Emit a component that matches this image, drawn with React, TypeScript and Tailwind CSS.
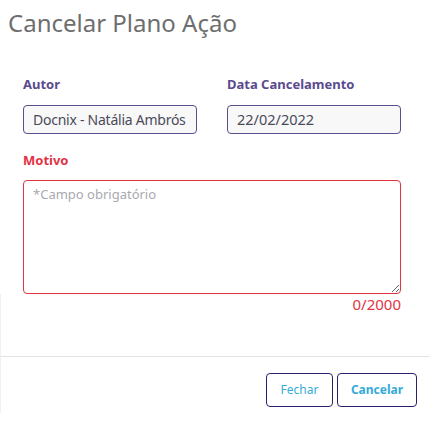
import React from "react";

const App = () => {
  return (
    <div className="w-[430px] h-[431px] bg-white font-['Noto_Sans',sans-serif] overflow-hidden">
      <h1 className="pt-[7px] pl-2 text-[24px] leading-[32px] font-normal text-[#6e6e6e]">
        Cancelar Plano Ação
      </h1>

      <div className="pl-[23px] pr-[29px] mt-[36px]">
        <div className="grid grid-cols-2 gap-[30px]">
          <div>
            <label className="block text-[13px] leading-[18px] font-bold text-[#5b4a8e]">
              Autor
            </label>
            <div className="mt-3 w-full h-[29px] pl-[9px] pr-[10px] flex items-center rounded border border-[#5c4d8f] bg-[#f8f8f8]">
              <span className="block min-w-0 flex-1 overflow-hidden whitespace-nowrap text-[14px] tracking-[-0.25px] text-[#4a4a58]">
                Docnix - Natália Ambrósio
              </span>
            </div>
          </div>
          <div>
            <label className="block text-[13px] leading-[18px] font-bold text-[#5b4a8e]">
              Data Cancelamento
            </label>
            <div className="mt-3 w-full h-[29px] pl-[9px] pr-[10px] flex items-center rounded border border-[#5c4d8f] bg-[#f8f8f8]">
              <span className="block min-w-0 flex-1 overflow-hidden whitespace-nowrap text-[14.5px] text-[#4a4a58]">
                22/02/2022
              </span>
            </div>
          </div>
        </div>

        <label className="block mt-[17px] text-[13px] leading-[18px] font-bold text-[#e23345]">
          Motivo
        </label>
        <textarea
          placeholder="*Campo obrigatório"
          className="block mt-[11px] w-full h-[114px] px-[9px] py-[4px] rounded border border-[#e23345] bg-white text-[13px] leading-[18px] text-[#444] placeholder:text-[#a9a9b0] outline-none"
        />
      </div>

      <div className="border-l border-[#f0f0f0]">
        <div className="pr-[29px] text-right text-[15px] leading-[20px] text-[#e23345]">
          0/2000
        </div>
        <div className="mt-[42px] border-t border-[#e2e2e2]" />
        <div className="flex justify-end gap-1 pr-[13px] pt-4 pb-[6px]">
          <button className="h-[34px] w-[67px] rounded border border-[#2d1f6e] text-[12px] text-[#35abd9] bg-white">
            Fechar
          </button>
          <button className="h-[34px] w-[80px] rounded border border-[#2d1f6e] text-[12px] font-bold text-[#35abd9] bg-white">
            Cancelar
          </button>
        </div>
      </div>
    </div>
  );
};

export default App;
